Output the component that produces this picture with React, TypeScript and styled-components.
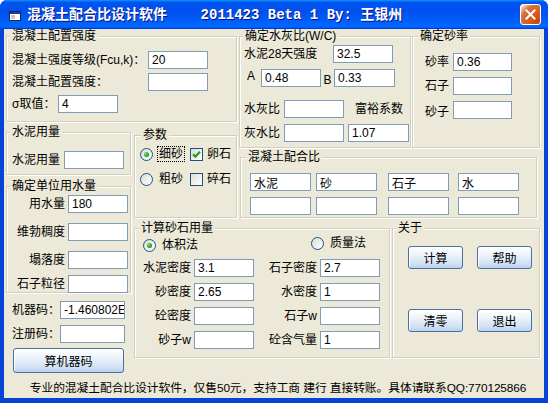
// Dependencies
import React from 'react'
import styled, { createGlobalStyle } from 'styled-components'

const FONT = `'Liberation Sans', 'Noto Sans CJK SC', sans-serif`

// Page
export default () => (
  <>
    <GlobalStyle />
    <Window>
      <TitleBar>
        <AppIcon width="14" height="12" viewBox="0 0 14 12">
          <rect x="1.5" y="1.5" width="11" height="9" fill="#fff" stroke="#1b2a55" />
          <rect x="2" y="2" width="10" height="2" fill="#26379a" />
          <rect x="3" y="5" width="4" height="4" fill="#cfcbbb" />
        </AppIcon>
        <Title>{'混凝土配合比设计软件    2011423 Beta 1 By: 王银州'}</Title>
        <CloseButton>
          <svg width="11" height="11" viewBox="0 0 11 11">
            <path d="M1.5 1.5 L9.5 9.5 M9.5 1.5 L1.5 9.5" stroke="#fff" strokeWidth="2" strokeLinecap="square" />
          </svg>
        </CloseButton>
      </TitleBar>
      <Body>
        <Client>
          <Layout>
            <Frame $col="1 / 3" $row="1" $w={231} $h={93}>
              <Caption>混凝土配置强度</Caption>
              <Row $mt={8} $pl={5}>
                <Label $w={136}>混凝土强度等级(Fcu,k)：</Label>
                <Field value="20" />
              </Row>
              <Row $mt={4} $pl={5}>
                <Label $w={136}>混凝土配置强度：</Label>
                <Field value="" />
              </Row>
              <Row $mt={4} $pl={5}>
                <Label $w={46}>σ取值：</Label>
                <Field value="4" />
              </Row>
            </Frame>

            <Frame $col="3 / 5" $row="1 / 3" $w={172} $h={119}>
              <Caption>确定水灰比(W/C)</Caption>
              <Row $mt={2} $pl={4}>
                <Label $w={89}>水泥28天强度</Label>
                <Field value="32.5" />
              </Row>
              <Row $mt={6} $pl={7}>
                <Label $w={14} $valign="flex-start">A</Label>
                <Field value="0.48" />
                <Label $w={13} $valign="flex-end" $center>B</Label>
                <Field $w={61} value="0.33" />
              </Row>
              <Row $mt={13} $pl={4}>
                <Label $w={40}>水灰比</Label>
                <Field value="" />
                <Label $ml={11}>富裕系数</Label>
              </Row>
              <Row $mt={6} $pl={4}>
                <Label $w={40}>灰水比</Label>
                <Field value="" />
                <Field $w={61} $ml={4} value="1.07" />
              </Row>
            </Frame>

            <Frame $col="5" $row="1 / 3" $w={128} $h={119}>
              <Caption $inset={5}>确定砂率</Caption>
              <Row $mt={10} $pl={12}>
                <Label $w={28}>砂率</Label>
                <Field $w={59} value="0.36" />
              </Row>
              <Row $mt={6} $pl={12}>
                <Label $w={28}>石子</Label>
                <Field $w={59} value="" />
              </Row>
              <Row $mt={6} $pl={12}>
                <Label $w={28} $valign="flex-end">砂子</Label>
                <Field $w={59} value="" />
              </Row>
            </Frame>

            <LeftColumn>
              <Frame $w={125} $h={50}>
                <Caption>水泥用量</Caption>
                <Row $mt={12} $pl={5}>
                  <Label $w={52}>水泥用量</Label>
                  <Field value="" />
                </Row>
              </Frame>
              <Frame $w={125} $h={114} $mt={4}>
                <Caption>确定单位用水量</Caption>
                <Row $mt={2}>
                  <Label $w={58} $right>用水量</Label>
                  <Field $ml={3} value="180" />
                </Row>
                <Row $mt={10}>
                  <Label $w={58} $right>维勃稠度</Label>
                  <Field $ml={3} value="" />
                </Row>
                <Row $mt={10}>
                  <Label $w={58} $right>塌落度</Label>
                  <Field $ml={3} value="" />
                </Row>
                <Row $mt={6}>
                  <Label $w={58} $right>石子粒径</Label>
                  <Field $ml={3} value="" />
                </Row>
              </Frame>
              <Register>
                <Row>
                  <Label $w={48}>机器码：</Label>
                  <Field $w={65} value="-1.460802E+09" />
                </Row>
                <Row $mt={6}>
                  <Label $w={48}>注册码：</Label>
                  <Field $w={65} value="" />
                </Row>
                <Button $w={111} $h={25} $ml={1} $mt={5}>算机器码</Button>
              </Register>
            </LeftColumn>

            <Frame $col="2" $row="2 / 4" $w={103} $h={90} $mt={3}>
              <Caption $inset={6}>参数</Caption>
              <Row $mt={4} $pl={5} $h={16}>
                <Choice>
                  <Radio $on />
                  <ChoiceText $focus>细砂</ChoiceText>
                </Choice>
                <Choice $ml={5}>
                  <Check $on>
                    <svg width="9" height="9" viewBox="0 0 9 9">
                      <path d="M1 4.2 L3.4 6.6 L8 1.8" fill="none" stroke="#21a121" strokeWidth="2.2" />
                    </svg>
                  </Check>
                  卵石
                </Choice>
              </Row>
              <Row $mt={9} $pl={5} $h={16}>
                <Choice>
                  <Radio />
                  <ChoiceText>粗砂</ChoiceText>
                </Choice>
                <Choice $ml={5}>
                  <Check />
                  碎石
                </Choice>
              </Row>
            </Frame>

            <Frame $col="3 / 6" $row="3" $w={297} $h={68} $ml={1}>
              <Caption $inset={5}>混凝土配合比</Caption>
              <Mix>
                <Field $w={61} value="水泥" />
                <Field $w={61} value="砂" />
                <Field $w={61} value="石子" />
                <Field $w={61} value="水" />
                <Field $w={61} value="" />
                <Field $w={61} value="" />
                <Field $w={61} value="" />
                <Field $w={61} value="" />
              </Mix>
            </Frame>

            <Frame $col="2 / 4" $row="4" $w={256} $h={137}>
              <Caption $inset={4}>计算砂石用量</Caption>
              <Methods>
                <Choice $self="flex-end">
                  <Radio $on />
                  <ChoiceText>体积法</ChoiceText>
                </Choice>
                <Choice $ml={111}>
                  <Radio />
                  <ChoiceText>质量法</ChoiceText>
                </Choice>
              </Methods>
              <Densities>
                <Label $right>水泥密度</Label>
                <Field value="3.1" />
                <Label $right>石子密度</Label>
                <Field value="2.7" />
                <Label $right>砂密度</Label>
                <Field value="2.65" />
                <Label $right>水密度</Label>
                <Field value="1" />
                <Label $right>砼密度</Label>
                <Field value="" />
                <Label $right>石子w</Label>
                <Field value="" />
                <Label $right>砂子w</Label>
                <Field value="" />
                <Label $right>砼含气量</Label>
                <Field value="1" />
              </Densities>
            </Frame>

            <Frame $col="4 / 6" $row="4" $w={148} $h={137}>
              <Caption>关于</Caption>
              <Actions>
                <Button>计算</Button>
                <Button>帮助</Button>
                <Button>清零</Button>
                <Button>退出</Button>
              </Actions>
            </Frame>
          </Layout>
          <Footer>专业的混凝土配合比设计软件，仅售50元，支持工商 建行 直接转账。具体请联系QQ:770125866</Footer>
        </Client>
      </Body>
    </Window>
  </>
)

// Styled Components
const GlobalStyle = createGlobalStyle`
  html, body {
    margin: 0;
    padding: 0;
    background: #fff;
  }

  body {
    font: 12px ${FONT};
    color: #000;
  }
`

const Window = styled.div`
  width: 548px;
  height: 403px;
  display: flex;
  flex-direction: column;
  background: #0843d8;
  border-radius: 7px 7px 0 0;
  overflow: hidden;
`

const TitleBar = styled.div`
  flex: none;
  height: 29px;
  display: flex;
  align-items: center;
  padding: 0 7px 0 8px;
  background: linear-gradient(
    180deg,
    #0997ff 0%,
    #0053ee 8%,
    #0050ee 40%,
    #0066ff 88%,
    #0066ff 93%,
    #005bff 95%,
    #003dd7 96%,
    #003dd7 100%
  );
`

const AppIcon = styled.svg`
  flex: none;
  margin-top: 2px;
`

const Title = styled.div`
  flex: 1;
  margin-left: 5px;
  font: bold 14px 'Liberation Mono', 'Noto Sans CJK SC', monospace;
  line-height: 16px;
  color: #fff;
  white-space: pre;
  text-shadow: 1px 1px #0f1089;
`

const CloseButton = styled.div`
  flex: none;
  box-sizing: border-box;
  width: 21px;
  height: 21px;
  display: flex;
  align-items: center;
  justify-content: center;
  border: 1px solid #fff;
  border-radius: 3px;
  background: radial-gradient(circle at 90% 90%, #cc4600 0%, #dc6527 55%, #cd7546 70%, #ffccb2 90%, #fff 100%);
`

const Body = styled.div`
  flex: 1;
  display: flex;
  padding: 0 4px 5px;
`

const Client = styled.div`
  flex: 1;
  display: flex;
  flex-direction: column;
  background: #ece9d8;
`

const Layout = styled.div`
  display: grid;
  grid-template-columns: 128px 105px 153px 20px 128px;
  grid-template-rows: 96px 25px 71px 137px 17px;
  padding-left: 2px;
`

const Frame = styled.fieldset<{ $col?: string; $row?: string; $w: number; $h: number; $mt?: number; $ml?: number }>`
  ${p => (p.$col ? `grid-column: ${p.$col};` : '')}
  ${p => (p.$row ? `grid-row: ${p.$row};` : '')}
  align-self: start;
  justify-self: start;
  box-sizing: border-box;
  width: ${p => p.$w}px;
  height: ${p => p.$h}px;
  min-width: 0;
  margin: ${p => p.$mt ?? 0}px 0 0 ${p => p.$ml ?? 0}px;
  padding: 0;
  border: 1px solid #d0d0bf;
  box-shadow: inset 1px 1px #fff, 1px 1px #fff;
`

const Caption = styled.legend<{ $inset?: number }>`
  margin-left: ${p => p.$inset ?? 3}px;
  padding: 0 2px;
  line-height: 14px;
  background: #ece9d8;
`

const Row = styled.div<{ $mt?: number; $pl?: number; $h?: number }>`
  display: flex;
  align-items: center;
  height: ${p => p.$h ?? 18}px;
  margin-top: ${p => p.$mt ?? 0}px;
  padding-left: ${p => p.$pl ?? 0}px;
`

const Label = styled.span<{ $w?: number; $ml?: number; $right?: boolean; $center?: boolean; $valign?: string }>`
  flex: none;
  ${p => (p.$w ? `width: ${p.$w}px;` : '')}
  margin-left: ${p => p.$ml ?? 0}px;
  align-self: ${p => p.$valign ?? 'center'};
  text-align: ${p => (p.$right ? 'right' : p.$center ? 'center' : 'left')};
  line-height: 14px;
  white-space: nowrap;
`

const Field = styled.input.attrs({ readOnly: true, type: 'text' })<{ $w?: number; $ml?: number }>`
  flex: none;
  box-sizing: border-box;
  width: ${p => p.$w ?? 60}px;
  height: 18px;
  margin: 0 0 0 ${p => p.$ml ?? 0}px;
  padding: 0 0 0 3px;
  border: 1px solid #7f9db9;
  background: #fff;
  font: 12px ${FONT};
  color: #000;
  outline: none;
`

const LeftColumn = styled.div`
  grid-column: 1;
  grid-row: 2 / 6;
  display: flex;
  flex-direction: column;
`

const Register = styled.div`
  display: flex;
  flex-direction: column;
  margin-top: 8px;
  padding-left: 6px;
`

const Choice = styled.label<{ $ml?: number; $self?: string }>`
  display: inline-flex;
  align-items: center;
  gap: 4px;
  margin-left: ${p => p.$ml ?? 0}px;
  align-self: ${p => p.$self ?? 'center'};
  line-height: 14px;
  white-space: nowrap;
`

const Radio = styled.span<{ $on?: boolean }>`
  flex: none;
  box-sizing: border-box;
  width: 13px;
  height: 13px;
  display: flex;
  align-items: center;
  justify-content: center;
  border: 1px solid #1c5180;
  border-radius: 50%;
  background: linear-gradient(135deg, #dcdcd7, #fff);

  &::after {
    content: '';
    display: ${p => (p.$on ? 'block' : 'none')};
    width: 5px;
    height: 5px;
    border-radius: 50%;
    background: radial-gradient(circle at 35% 35%, #7fe07b, #21a121 60%, #10800e);
  }
`

const ChoiceText = styled.span<{ $focus?: boolean }>`
  padding: 0 1px;
  border: 1px dotted ${p => (p.$focus ? '#000' : 'transparent')};
`

const Check = styled.span<{ $on?: boolean }>`
  flex: none;
  box-sizing: border-box;
  width: 13px;
  height: 13px;
  display: flex;
  align-items: center;
  justify-content: center;
  border: 1px solid #1c5180;
  background: linear-gradient(135deg, #dcdcd7, #fff);
`

const Mix = styled.div`
  display: grid;
  grid-template-columns: 66px 72px 70px 61px;
  row-gap: 6px;
  margin-top: 9px;
  padding-left: 9px;
`

const Methods = styled.div`
  display: flex;
  align-items: flex-start;
  height: 20px;
  margin-top: -2px;
  padding-left: 8px;
`

const Densities = styled.div`
  display: grid;
  grid-template-columns: 54px 60px 60px 60px;
  grid-auto-rows: 18px;
  gap: 6px 3px;
  align-items: center;
  margin-top: 6px;
  padding-left: 2px;
`

const Actions = styled.div`
  display: grid;
  grid-template-columns: 55px 55px;
  gap: 40px 14px;
  margin-top: 11px;
  padding-left: 15px;
`

const Button = styled.button<{ $w?: number; $h?: number; $ml?: number; $mt?: number }>`
  box-sizing: border-box;
  width: ${p => p.$w ?? 55}px;
  height: ${p => p.$h ?? 23}px;
  margin: ${p => p.$mt ?? 0}px 0 0 ${p => p.$ml ?? 0}px;
  padding: 0;
  border: 1px solid #4a6f9c;
  border-radius: 3px;
  background: linear-gradient(180deg, #ffffff 0%, #eef4fb 35%, #d3e3f4 75%, #bcd3ec 100%);
  box-shadow: inset 1px 1px #fff;
  font: 12px ${FONT};
  color: #000;
`

const Footer = styled.div`
  flex: 1;
  display: flex;
  align-items: center;
  justify-content: center;
  padding-left: 8px;
  font-size: 11.8px;
  letter-spacing: -0.1px;
  white-space: nowrap;
`
